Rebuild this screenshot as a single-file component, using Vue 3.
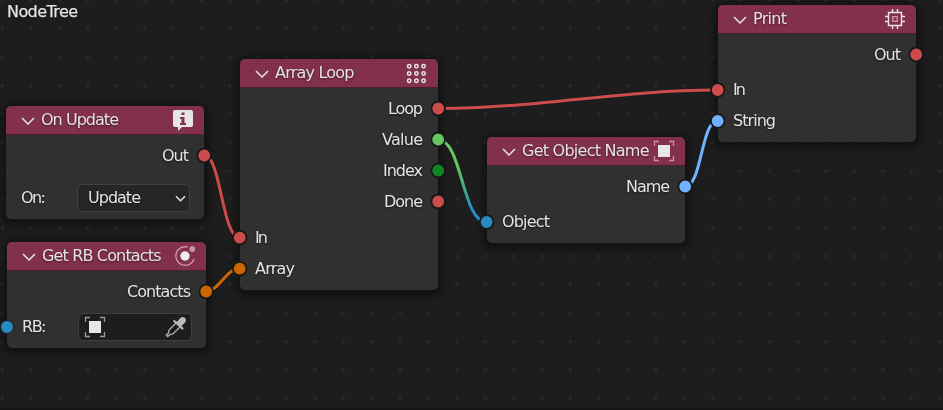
<script setup>
const colors = {
  exec: '#cc4c4c',
  value: '#63c763',
  index: '#108525',
  list: '#cc6600',
  object: '#268bbf',
  string: '#70b2ff',
}

const nodes = [
  { id: 'update', title: 'On Update', icon: 'info', x: 6, y: 106, w: 198, h: 113, tw: 78,
    outputs: [{ name: 'Out', type: 'exec', w: 27 }], inputs: [],
    field: { label: 'On:', kind: 'select', value: 'Update', w: 25 } },
  { id: 'contacts', title: 'Get RB Contacts', icon: 'orbit', x: 7, y: 242, w: 199, h: 106, tw: 119.500,
    outputs: [{ name: 'Contacts', type: 'list', w: 64 }], inputs: [],
    field: { label: 'RB:', kind: 'object', socket: 'object', w: 24.5 } },
  { id: 'loop', title: 'Array Loop', icon: 'grid', x: 240, y: 59, w: 198, h: 231, tw: 79.500,
    outputs: [
      { name: 'Loop', type: 'exec', w: 35 },
      { name: 'Value', type: 'value', w: 41 },
      { name: 'Index', type: 'index', w: 40 },
      { name: 'Done', type: 'exec', w: 39 },
    ],
    inputs: [{ name: 'In', type: 'exec', w: 13 }, { name: 'Array', type: 'list', w: 40 }] },
  { id: 'name', title: 'Get Object Name', icon: 'object', x: 487, y: 137, w: 198, h: 106, tw: 127.500,
    outputs: [{ name: 'Name', type: 'string', w: 44 }],
    inputs: [{ name: 'Object', type: 'object', w: 48 }] },
  { id: 'print', title: 'Print', icon: 'chip', x: 718, y: 5, w: 198, h: 137, tw: 34,
    outputs: [{ name: 'Out', type: 'exec', w: 27 }],
    inputs: [{ name: 'In', type: 'exec', w: 13 }, { name: 'String', type: 'string', w: 43 }] },
]

const inputOffset = (n) => (n.outputs.length > 1 ? 0.7 : 0)

const links = [
  { d: 'M204 155C221 155 222 237.500 239.500 237.500', color: '#cc4c4c' },
  { d: 'M205.500 291.500C219 291.500 226 268.500 239.500 268.500', color: '#cc6600' },
  { d: 'M438 108.500C536 108.500 620 90 717.500 90', color: '#cc4c4c' },
  { d: 'M438 139.500C462 139.500 462 222 486.500 222', color: 'url(#value-object)' },
  { d: 'M685 186.500C702 186.500 701 121 717.500 121', color: '#70b2ff' },
]
</script>

<template>
  <main class="editor">
    <svg class="backdrop" width="943" height="410">
      <defs>
        <pattern id="dots" x="1" y="-1" width="28.4" height="28.4" patternUnits="userSpaceOnUse">
          <rect width="3" height="3" fill="#292929" />
        </pattern>
      </defs>
      <rect width="943" height="410" fill="url(#dots)" shape-rendering="crispEdges" />
    </svg>
    <div class="tree-name">
      <svg class="label" width="73" height="20"><text x="0" y="14" textLength="71">NodeTree</text></svg>
    </div>

    <section v-for="n in nodes" :key="n.id" class="node"
      :style="{ left: n.x + 'px', top: n.y + 'px', width: n.w + 'px', height: n.h + 'px' }">
      <header>
        <svg class="chevron" width="14" height="8" viewBox="0 0 14 8"><path d="M1 1L7 7L13 1" /></svg>
        <svg class="label title" height="28" :width="n.tw">
          <text x="0" y="19" :textLength="n.tw" lengthAdjust="spacing">{{ n.title }}</text>
        </svg>
        <svg class="icon" width="22" height="22" viewBox="0 0 22 22">
          <template v-if="n.icon === 'info'">
            <path d="M3 1H19Q21 1 21 3V16Q21 18 19 18H10L6 22V18H3Q1 18 1 16V3Q1 1 3 1Z" fill="#e6e6e6" />
            <path d="M9.500 3.500h3v2.500h-3zM8 8h4.500v6H14v2H8v-2h1.500v-4H8z" fill="#83314a" />
          </template>
          <template v-else-if="n.icon === 'orbit'">
            <path d="M13.500 2A9.300 9.300 0 1 0 20 14" fill="none" stroke="#c795a3" stroke-width="1.500" />
            <circle cx="11" cy="11" r="4.700" fill="#eee" />
            <circle cx="18.300" cy="4" r="2.900" fill="#c795a3" />
          </template>
          <template v-else-if="n.icon === 'grid'">
            <g v-for="r in 3" :key="r">
              <circle v-for="c in 3" :key="c" :cx="c * 7.200 - 4" :cy="r * 7.200 - 2.900" r="1.700"
                fill="none" stroke="#e6e6e6" stroke-width="1.500" />
            </g>
          </template>
          <template v-else-if="n.icon === 'object'">
            <path d="M1.500 6V1.500H6M16 1.500H20.500V6M20.500 16V20.500H16M6 20.500H1.500V16" fill="none" stroke="#c795a3" stroke-width="1.300" />
            <rect x="5" y="5" width="12" height="12" fill="#e6e6e6" />
          </template>
          <template v-else>
            <path d="M4.500 4.500H17.500V17.500H4.500zM8.500 1V4M13.500 1V4M8.500 18V21M13.500 18V21M1 8.500H4M1 13.500H4M18 8.500H21M18 13.500H21" fill="none" stroke="#e6e6e6" stroke-width="1.400" />
            <rect x="8.700" y="8.700" width="4.600" height="4.600" fill="none" stroke="#c795a3" stroke-width="1.400" />
          </template>
        </svg>
      </header>
      <div class="rows">
        <div v-for="s in n.outputs" :key="s.name" class="row output">
          <svg class="label" height="31" :width="s.w + 1">
            <text x="0" y="21" :textLength="s.w">{{ s.name }}</text>
          </svg>
        </div>
        <div class="inputs" :class="{ spaced: n.outputs.length > 1 }">
          <div v-for="s in n.inputs" :key="s.name" class="row">
            <svg class="label" height="31" :width="s.w + 1">
              <text x="0" y="21" :textLength="s.w">{{ s.name }}</text>
            </svg>
          </div>
        </div>
        <div v-if="n.field" class="row field-row" :class="n.field.kind">
          <i v-if="n.field.socket" class="socket"></i>
          <svg class="label" height="31" :width="n.field.w + 1">
            <text x="0" y="21" :textLength="n.field.w">{{ n.field.label }}</text>
          </svg>
          <div v-if="n.field.kind === 'select'" class="field">
            <svg class="label" height="26" width="55"><text x="0" y="18" textLength="53">{{ n.field.value }}</text></svg>
            <svg class="arrow" width="11" height="8" viewBox="0 0 11 8"><path d="M1 1.200L5.500 5.700L10 1.200" fill="none" stroke="#e0e0e0" stroke-width="1.600" /></svg>
          </div>
          <div v-else class="field picker">
            <svg width="22" height="22" viewBox="0 0 22 22">
              <path d="M1.500 6V1.500H6M16 1.500H20.500V6M20.500 16V20.500H16M6 20.500H1.500V16" fill="none" stroke="#999" stroke-width="1.300" />
              <rect x="5" y="5" width="12" height="12" fill="#e6e6e6" />
            </svg>
            <svg width="22" height="22" viewBox="0 0 22 22">
              <path d="M11 7L4.500 13.500Q3.300 14.700 3.700 16.700L1.300 19L2.700 20.500L5.300 18.300Q7 18.700 8.300 17.500L15 11" fill="none" stroke="#b0b0b0" stroke-width="1.300" />
              <path d="M7.800 5L9.200 3.700L12 5.700L15 2.300Q17.500 0 20 1.800Q22 4 20 6.700L16.700 9.800L18.700 12.600L17.400 14Z" fill="#b8b8b8" />
            </svg>
          </div>
        </div>
      </div>
    </section>

    <svg class="links" width="943" height="410">
      <defs>
        <linearGradient id="value-object" gradientUnits="userSpaceOnUse" x1="440" y1="140" x2="486" y2="222">
          <stop offset="0" stop-color="#63c763" /><stop offset="0.350" stop-color="#63c763" /><stop offset="0.800" stop-color="#268bbf" />
        </linearGradient>
      </defs>
      <g v-for="l in links" :key="l.d" fill="none">
        <path :d="l.d" stroke="#1a1a1a" stroke-width="5" stroke-opacity="0.5" />
        <path :d="l.d" :stroke="l.color" stroke-width="3" />
      </g>
    </svg>
    <svg class="links" width="943" height="410">
      <g v-for="n in nodes" :key="n.id" stroke="#171717" stroke-width="1.800">
        <circle v-for="(s, i) in n.outputs" :key="'o' + i" :cx="n.x + n.w + 0.200" :cy="n.y + 49.500 + i * 31" r="6.800" :fill="colors[s.type]" />
        <circle v-for="(s, i) in n.inputs" :key="'i' + i" :cx="n.x - 0.300" :cy="n.y + 54 + inputOffset(n) + (n.outputs.length + i) * 31" r="6.800" :fill="colors[s.type]" />
      </g>
    </svg>
    <div class="bottom-edge"></div>
  </main>
</template>

<style>
body { background: #1d1d1d; overflow: hidden; }
</style>

<style scoped>
.editor { position: relative; width: 943px; height: 410px; overflow: hidden; background: #1d1d1d; font-family: "DejaVu Sans", sans-serif; color: #e3e3e3; }
.backdrop, .links { position: absolute; inset: 0; display: block; pointer-events: none; }
.tree-name { position: relative; padding: 3px 0 0 7px; }
.tree-name .label { stroke: #e3e3e3; stroke-width: .25px; }
.node { position: absolute; box-sizing: border-box; border-radius: 5px; background: #303030; box-shadow: 0 0 0 1px #141414, 0 2px 9px 3px rgba(0, 0, 0, .5); }
header { display: flex; align-items: center; height: 28px; padding: 0 10.500px 0 15px; border-bottom: 1px solid #4a2031; border-radius: 5px 5px 0 0; background: #83314a; }
.chevron { flex: none; margin-top: 2px; fill: none; stroke: #e3e3e3; stroke-width: 1.500; }
.title { margin-left: 6px; }
.icon { flex: none; margin-left: auto; }
.label { display: block; flex: none; overflow: visible; font-size: 16px; fill: #e3e3e3; filter: drop-shadow(0 1px 1px rgba(0, 0, 0, .5)); }
.rows { padding-top: 5px; }
.row { position: relative; display: flex; align-items: center; height: 31px; padding: 0 14px 0 15px; }
.output { justify-content: flex-end; }
.inputs { padding-top: 4px; }
.inputs.spaced { padding-top: 5px; }
.socket { position: absolute; left: -7.500px; width: 12px; height: 12px; border: 1.500px solid #171717; border-radius: 50%; background: #268bbf; }
.field-row.select { padding-top: 7px; }
.field { display: flex; align-items: center; justify-content: space-between; box-sizing: border-box; width: 113px; height: 28px; margin-left: auto; padding: 0 3px 0 10px; border: 1px solid #404040; border-radius: 5px; background: #262626; }
.arrow { margin-top: 3px; }
.picker { width: 114px; padding: 0 4px 0 5px; background: #1d1d1d; }
.bottom-edge { position: absolute; left: 0; right: 0; bottom: 0; height: 2px; background: #171416; }
</style>
